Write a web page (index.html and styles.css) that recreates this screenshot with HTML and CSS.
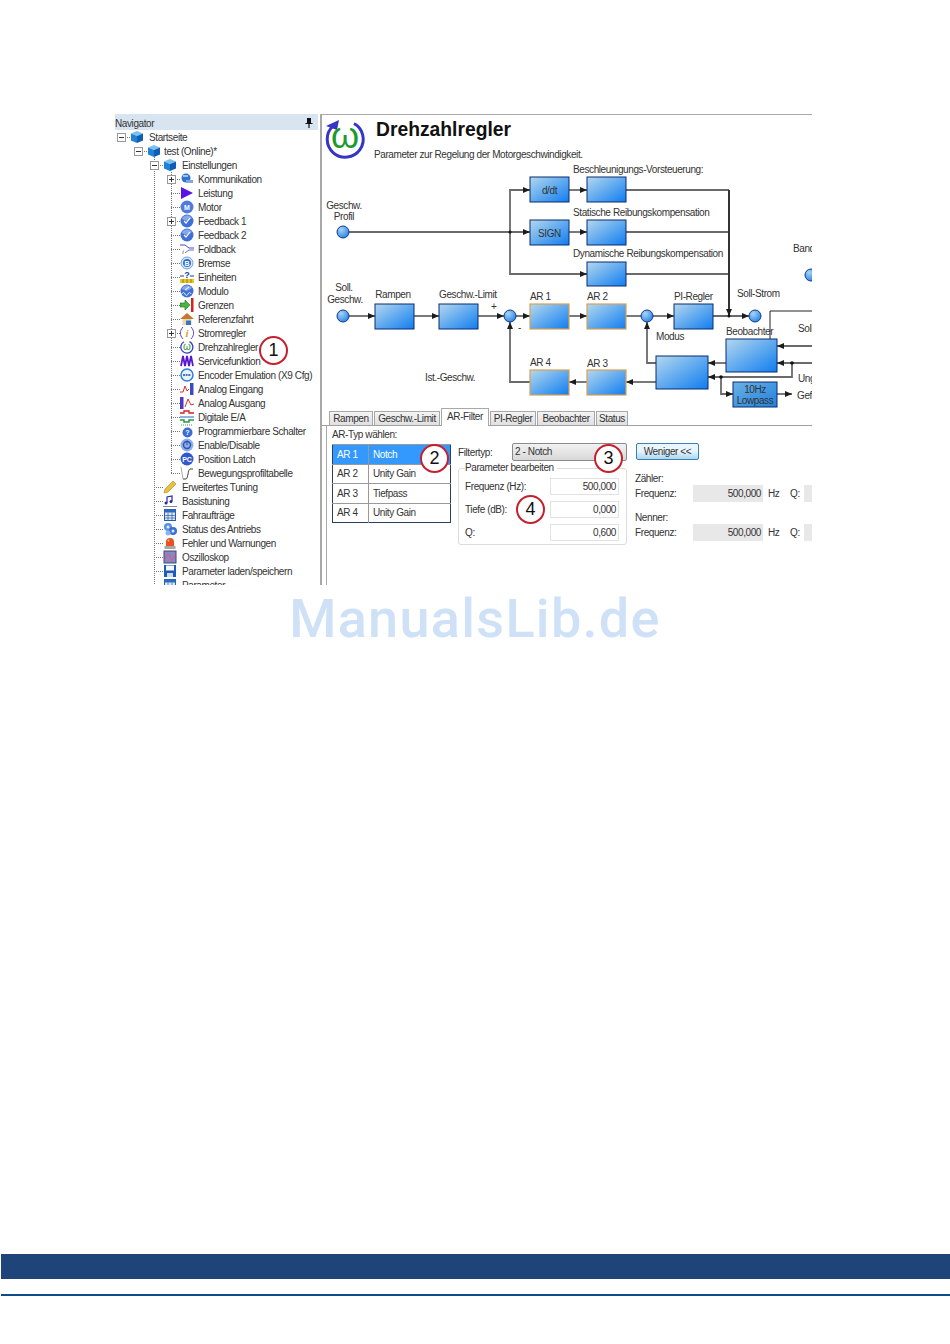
FILE: index.html
```html
<!DOCTYPE html>
<html lang="de">
<head>
    <meta charset="UTF-8">
    <title>Drehzahlregler</title>
    <link rel="stylesheet" href="styles.css">
</head>
<body>

    <svg class="defs">
        <defs>
            <symbol id="cube" viewBox="0 0 14 14">
                <polygon points="7,1 13,3.5 7,6 1,3.5" fill="#7cc0f0"/>
                <polygon points="1,3.5 7,6 7,13 1,10.5" fill="#1f82d8"/>
                <polygon points="13,3.5 7,6 7,13 13,10.5" fill="#0e5fb4"/>
            </symbol>
            <symbol id="ball" viewBox="0 0 14 14">
                <circle cx="7" cy="7" r="6.5" fill="#3f6fd8"/>
                <path d="M1.5 5 A6 6 0 0 1 12 4 L7 7 Z" fill="#86a8ea"/>
            </symbol>
            <symbol id="table" viewBox="0 0 14 14">
                <rect x="1.5" y="1.5" width="11" height="11" fill="#dce8f6" stroke="#2a5ea8"/>
                <rect x="1.5" y="1.5" width="11" height="3" fill="#2a6cc0"/>
                <path d="M1.5 7.5H12.5M1.5 10H12.5M5 4.5V12.5M9 4.5V12.5" stroke="#2a5ea8" stroke-width=".7"/>
            </symbol>
            <linearGradient id="blk" x1="0" y1="0" x2="1" y2="1">
                <stop offset="0" stop-color="#b4d8ee"/>
                <stop offset="1" stop-color="#0f7df0"/>
            </linearGradient>
            <linearGradient id="low" x1="0" y1="0" x2="1" y2="1">
                <stop offset="0" stop-color="#6cb2e6"/>
                <stop offset="1" stop-color="#1f80dc"/>
            </linearGradient>
            <radialGradient id="dot" cx=".35" cy=".3" r=".8">
                <stop offset="0" stop-color="#a9d4f6"/>
                <stop offset="1" stop-color="#1f7fe8"/>
            </radialGradient>
            <marker id="arr" markerUnits="userSpaceOnUse" markerWidth="8" markerHeight="6" refX="7" refY="3" orient="auto">
                <polygon points="0,0 7,3 0,6" fill="#1c1c1c"/>
            </marker>
        </defs>
    </svg>

    <div class="shot">
        <!-- Navigator tree -->
        <div class="nav">
            <div class="nav-head">
                <span>Navigator</span>
                <svg class="pin" viewBox="0 0 8 10"><path d="M2 0H6V5H7.5V6H4.6V10H3.4V6H.5V5H2Z" fill="#111"/></svg>
            </div>
            <div class="tree">
                <div class="guide g-test"></div>
                <div class="guide g-set"></div>
                <ul>
                    <li class="row l0"><span class="exp"><i class="box"></i></span><svg class="ico"><use href="#cube"/></svg><span>Startseite</span></li>
                    <li class="row l1"><span class="exp"><i class="box"></i></span><svg class="ico"><use href="#cube"/></svg><span>test (Online)*</span></li>
                    <li class="row l2"><span class="exp"><i class="box"></i></span><svg class="ico"><use href="#cube"/></svg><span>Einstellungen</span></li>
                    <li class="row l3"><span class="exp"><i class="box plus"></i></span><svg class="ico" viewBox="0 0 14 14"><circle cx="6" cy="6" r="4.5" fill="#2f72d0"/><rect x="6" y="8" width="7" height="3" fill="#7fa8dc"/><path d="M3 3h5v2H3z" fill="#9cc4f0"/></svg><span>Kommunikation</span></li>
                    <li class="row l3"><span class="exp"></span><svg class="ico" viewBox="0 0 14 14"><polygon points="1,1 13,7 1,13" fill="#5a14e6"/></svg><span>Leistung</span></li>
                    <li class="row l3"><span class="exp"></span><svg class="ico" viewBox="0 0 14 14"><circle cx="7" cy="7" r="6.5" fill="#4f7cdc"/><text class="ico-txt" x="7" y="10">M</text></svg><span>Motor</span></li>
                    <li class="row l3"><span class="exp"><i class="box plus"></i></span><svg class="ico" viewBox="0 0 14 14"><use href="#ball" width="14" height="14"/><path d="M4 7l2 2 4-5" fill="none" stroke="#fff" stroke-width="1.2"/></svg><span>Feedback 1</span></li>
                    <li class="row l3"><span class="exp"></span><svg class="ico" viewBox="0 0 14 14"><use href="#ball" width="14" height="14"/><path d="M4 7l2 2 4-5" fill="none" stroke="#fff" stroke-width="1.2"/></svg><span>Feedback 2</span></li>
                    <li class="row l3"><span class="exp"></span><svg class="ico" viewBox="0 0 14 14"><path d="M0 3H5L9 6H14" fill="none" stroke="#4a4ac0"/><path d="M5 11L9 8H14" fill="none" stroke="#6a6ad0"/><text class="ico-i" x="2" y="12">i</text></svg><span>Foldback</span></li>
                    <li class="row l3"><span class="exp"></span><svg class="ico" viewBox="0 0 14 14"><circle cx="7" cy="7" r="6" fill="#d8e8f8" stroke="#6aa0e0"/><circle cx="7" cy="7" r="4" fill="#2f6fd0"/><text class="ico-txt" x="7" y="9.5">B</text></svg><span>Bremse</span></li>
                    <li class="row l3"><span class="exp"></span><svg class="ico" viewBox="0 0 14 14"><text class="ico-q" x="7" y="7.5">?</text><path d="M0 6H4M10 6H14" stroke="#1a3fa0"/><rect x="0" y="9" width="14" height="4" fill="#e8c820"/><path d="M3 9v4M7 9v4M11 9v4" stroke="#806000" stroke-width=".7"/></svg><span>Einheiten</span></li>
                    <li class="row l3"><span class="exp"></span><svg class="ico" viewBox="0 0 14 14"><use href="#ball" width="14" height="14"/><path d="M2 10c1-2 2-2 3 0s2 2 3 0 2-2 3 0M5 6l4-3" fill="none" stroke="#fff"/></svg><span>Modulo</span></li>
                    <li class="row l3"><span class="exp"></span><svg class="ico" viewBox="0 0 14 14"><polygon points="0,5 5,5 5,2 10,7 5,12 5,9 0,9" fill="#48b83c" stroke="#1c6a18" stroke-width=".6"/><rect x="11" y="0" width="2.5" height="14" fill="#d82020"/></svg><span>Grenzen</span></li>
                    <li class="row l3"><span class="exp"></span><svg class="ico" viewBox="0 0 14 14"><polygon points="7,1 14,7 0,7" fill="#c8782a"/><rect x="2.5" y="7" width="9" height="6" fill="#e8d8b0"/><rect x="6" y="8.5" width="5" height="4.5" fill="#3a72c8"/></svg><span>Referenzfahrt</span></li>
                    <li class="row l3"><span class="exp"><i class="box plus"></i></span><svg class="ico" viewBox="0 0 14 14"><path d="M3 1C-.5 5-.5 9 3 13M11 1C14.5 5 14.5 9 11 13" fill="none" stroke="#6a40c8"/><text class="ico-y" x="7" y="11">i</text></svg><span>Stromregler</span></li>
                    <li class="row l3"><span class="exp"></span><svg class="ico" viewBox="0 0 14 14"><path d="M9.5 1.7A6 6 0 1 1 4 1.8" fill="none" stroke="#3838c8" stroke-width="1.3"/><text class="ico-w" x="7" y="10">ω</text></svg><span>Drehzahlregler</span></li>
                    <li class="row l3"><span class="exp"></span><svg class="ico" viewBox="0 0 14 14"><path d="M1 12L3 2 5 12 7 2 9 12 11 2 13 12" fill="none" stroke="#5a18d0" stroke-width="1.8"/></svg><span>Servicefunktion</span></li>
                    <li class="row l3"><span class="exp"></span><svg class="ico" viewBox="0 0 14 14"><circle cx="7" cy="7" r="6" fill="#e8f2fc" stroke="#2f7fd8" stroke-width="1.5"/><path d="M3 7H11" stroke="#1c4ea8" stroke-width="1.4" stroke-dasharray="2 .6"/></svg><span>Encoder Emulation (X9 Cfg)</span></li>
                    <li class="row l3"><span class="exp"></span><svg class="ico" viewBox="0 0 14 14"><path d="M0 10L3 10 5 4 7 9 9 7" fill="none" stroke="#d83030"/><rect x="10" y="1" width="3.5" height="12" fill="#3c4cc0"/></svg><span>Analog Eingang</span></li>
                    <li class="row l3"><span class="exp"></span><svg class="ico" viewBox="0 0 14 14"><rect x="0" y="1" width="3.5" height="12" fill="#5038c0"/><path d="M5 11L8 3 11 9 14 8" fill="none" stroke="#d83030"/></svg><span>Analog Ausgang</span></li>
                    <li class="row l3"><span class="exp"></span><svg class="ico" viewBox="0 0 14 14"><path d="M0 3H4V1H9V3H14" fill="none" stroke="#d82020" stroke-width="1.3"/><path d="M0 7H14" stroke="#3060d0"/><path d="M0 10H4V12H9V10H14" fill="none" stroke="#20a040" stroke-width="1.5"/></svg><span>Digitale E/A</span></li>
                    <li class="row l3"><span class="exp"></span><svg class="ico" viewBox="0 0 14 14"><path d="M1 1H13" stroke="#777" stroke-dasharray="1 1"/><circle cx="7.5" cy="8.5" r="5" fill="#3a6cd4"/><text class="ico-txt" x="7.5" y="11">?</text></svg><span>Programmierbare Schalter</span></li>
                    <li class="row l3"><span class="exp"></span><svg class="ico" viewBox="0 0 14 14"><circle cx="7" cy="7" r="6.5" fill="#8eaee8"/><circle cx="7" cy="7" r="3.5" fill="none" stroke="#2a50b8" stroke-width="1.4"/><path d="M7 2.5V7" stroke="#2a50b8"/></svg><span>Enable/Disable</span></li>
                    <li class="row l3"><span class="exp"></span><svg class="ico" viewBox="0 0 14 14"><circle cx="7" cy="7" r="6.5" fill="#3258d0"/><text class="ico-txt" x="7" y="9.5">PC</text></svg><span>Position Latch</span></li>
                    <li class="row l3"><span class="exp"></span><svg class="ico" viewBox="0 0 14 14"><path d="M3 13H6C8 13 8 3 10 3H13" fill="none" stroke="#444"/><path d="M1 1L3 13" stroke="#aaa"/></svg><span>Bewegungsprofiltabelle</span></li>
                    <li class="row l2"><span class="exp"></span><svg class="ico" viewBox="0 0 14 14"><polygon points="10,1 13,4 5,12 1,13 2,9" fill="#e8c040" stroke="#b08818" stroke-width=".6"/></svg><span>Erweitertes Tuning</span></li>
                    <li class="row l2"><span class="exp"></span><svg class="ico" viewBox="0 0 14 14"><path d="M4 9V3L9 2V7" fill="none" stroke="#2828a0" stroke-width="1.2"/><circle cx="3" cy="9" r="1.5" fill="#2828a0"/><circle cx="8" cy="7.5" r="1.5" fill="#2828a0"/><path d="M0 12.5H14" stroke="#888"/></svg><span>Basistuning</span></li>
                    <li class="row l2"><span class="exp"></span><svg class="ico"><use href="#table"/></svg><span>Fahraufträge</span></li>
                    <li class="row l2"><span class="exp"></span><svg class="ico" viewBox="0 0 14 14"><circle cx="5" cy="5" r="4" fill="#5a90e0"/><circle cx="10" cy="9" r="4" fill="#3a70d0"/><circle cx="5" cy="11" r="2.5" fill="#8ab4ec"/><circle cx="5" cy="5" r="1.5" fill="#e0ecfa"/><circle cx="10" cy="9" r="1.5" fill="#e0ecfa"/></svg><span>Status des Antriebs</span></li>
                    <li class="row l2"><span class="exp"></span><svg class="ico" viewBox="0 0 14 14"><path d="M3 10V6A4 4 0 0 1 11 6V10Z" fill="#e8501c"/><circle cx="5.5" cy="4.5" r="1" fill="#f8b890"/><rect x="1.5" y="10" width="11" height="3" fill="#a8a8a8"/></svg><span>Fehler und Warnungen</span></li>
                    <li class="row l2"><span class="exp"></span><svg class="ico" viewBox="0 0 14 14"><rect x="1" y="1" width="12" height="12" fill="#8a88b8" stroke="#444478"/><path d="M2 10C4 2 6 3 7 7S10 11 12 5" fill="none" stroke="#e0509c"/></svg><span>Oszilloskop</span></li>
                    <li class="row l2"><span class="exp"></span><svg class="ico" viewBox="0 0 14 14"><rect x="1" y="1" width="12" height="12" fill="#1c5cb8"/><rect x="3" y="1.5" width="8" height="5" fill="#f4f8fc"/><rect x="4" y="9" width="6" height="4" fill="#cfdcec"/></svg><span>Parameter laden/speichern</span></li>
                    <li class="row l2"><span class="exp"></span><svg class="ico"><use href="#table"/></svg><span>Parameter</span></li>
                </ul>
            </div>
        </div>

        <!-- Controller page -->
        <div class="pane">
            <svg class="diagram" viewBox="322 115 490 293">
                <path d="M354 123.5A18 18 0 1 1 333 126" fill="none" stroke="#3636c6" stroke-width="3"/>
                <polygon points="326,126 339,120 337,130" fill="#3636c6"/>
                <text class="omega" x="345" y="148">ω</text>
                <text class="title" x="376" y="136">Drehzahlregler</text>
                <text class="lbl" x="374" y="157.5">Parameter zur Regelung der Motorgeschwindigkeit.</text>

                <!-- signal lines -->
                <g class="wire">
                    <path d="M349 232H530" marker-end="url(#arr)"/>
                    <path d="M510 232V190H530" marker-end="url(#arr)"/>
                    <path d="M510 232V274H587" marker-end="url(#arr)"/>
                    <path d="M569 190H587" marker-end="url(#arr)"/>
                    <path d="M569 232H587" marker-end="url(#arr)"/>
                    <path d="M626 190H729M626 232H729M626 274H729"/>
                    <path d="M349 316H375" marker-end="url(#arr)"/>
                    <path d="M414 316H439" marker-end="url(#arr)"/>
                    <path d="M478 316H504" marker-end="url(#arr)"/>
                    <path d="M516 316H530" marker-end="url(#arr)"/>
                    <path d="M569 316H587" marker-end="url(#arr)"/>
                    <path d="M626 316H641"/>
                    <path d="M653 316H674" marker-end="url(#arr)"/>
                    <path d="M713 316H749" marker-end="url(#arr)"/>
                    <path d="M530 382H510V322" marker-end="url(#arr)"/>
                    <path d="M587 382H569" marker-end="url(#arr)"/>
                    <path d="M656 382H626" marker-end="url(#arr)"/>
                    <path d="M656 363H647V322" marker-end="url(#arr)"/>
                    <path d="M726 363H708" marker-end="url(#arr)"/>
                    <path d="M812 346H777" marker-end="url(#arr)"/>
                    <path d="M812 363H777" marker-end="url(#arr)"/>
                    <path d="M792 363V377H708" marker-end="url(#arr)"/>
                    <path d="M721 377V394H733" marker-end="url(#arr)"/>
                    <path d="M777 394H792" marker-end="url(#arr)"/>
                </g>
                <path class="bus" d="M729 190V316" marker-end="url(#arr)"/>
                <path class="thin" d="M770 339V311H812"/>
                <circle class="node" cx="510" cy="232" r="1.5"/>
                <circle class="node" cx="729" cy="316" r="1.5"/>
                <circle class="node" cx="792" cy="363" r="1.8"/>
                <circle class="node" cx="721" cy="377" r="1.8"/>

                <!-- blocks -->
                <rect class="blk" x="530" y="177" width="39" height="25"/>
                <rect class="blk" x="587" y="177" width="39" height="25"/>
                <rect class="blk" x="530" y="220" width="39" height="25"/>
                <rect class="blk" x="587" y="220" width="39" height="25"/>
                <rect class="blk" x="587" y="262" width="39" height="24"/>
                <rect class="blk" x="375" y="304" width="39" height="25"/>
                <rect class="blk" x="439" y="304" width="39" height="25"/>
                <rect class="blk ar" x="530" y="304" width="39" height="25"/>
                <rect class="blk ar" x="587" y="304" width="39" height="25"/>
                <rect class="blk" x="674" y="304" width="39" height="25"/>
                <rect class="blk ar" x="530" y="370" width="39" height="25"/>
                <rect class="blk ar" x="587" y="370" width="39" height="25"/>
                <rect class="blk" x="656" y="356" width="52" height="33"/>
                <rect class="blk" x="726" y="339" width="51" height="33"/>
                <rect class="blk lowpass" x="733" y="382" width="44" height="25"/>

                <circle class="sum" cx="343" cy="232" r="6"/>
                <circle class="sum" cx="343" cy="316" r="6"/>
                <circle class="sum" cx="510" cy="316" r="6"/>
                <circle class="sum" cx="647" cy="316" r="6"/>
                <circle class="sum" cx="755" cy="316" r="6"/>
                <circle class="sum" cx="811" cy="275" r="6"/>

                <!-- labels -->
                <text class="lbl mid" x="549.5" y="193.5">d/dt</text>
                <text class="lbl mid" x="549.5" y="236.5">SIGN</text>
                <text class="lbl" x="573" y="172.5">Beschleunigungs-Vorsteuerung:</text>
                <text class="lbl" x="573" y="215.5">Statische Reibungskompensation</text>
                <text class="lbl" x="573" y="257">Dynamische Reibungskompensation</text>
                <text class="lbl" x="793" y="251.5">Band</text>
                <text class="lbl mid" x="344" y="208.5">Geschw.</text>
                <text class="lbl mid" x="344" y="219.5">Profil</text>
                <text class="lbl mid" x="344" y="290.5">Soll.</text>
                <text class="lbl mid" x="345" y="302.5">Geschw.</text>
                <text class="lbl mid" x="393" y="297.5">Rampen</text>
                <text class="lbl" x="439" y="297.5">Geschw.-Limit</text>
                <text class="lbl" x="491" y="310">+</text>
                <text class="lbl" x="518" y="331">-</text>
                <text class="lbl" x="530" y="299.5">AR 1</text>
                <text class="lbl" x="587" y="299.5">AR 2</text>
                <text class="lbl" x="674" y="299.5">PI-Regler</text>
                <text class="lbl" x="737" y="296.5">Soll-Strom</text>
                <text class="lbl" x="726" y="334.5">Beobachter</text>
                <text class="lbl" x="656" y="339.5">Modus</text>
                <text class="lbl" x="798" y="331.5">Soll</text>
                <text class="lbl" x="798" y="381.5">Ung</text>
                <text class="lbl" x="797" y="398.5">Gef</text>
                <text class="lbl" x="530" y="365.5">AR 4</text>
                <text class="lbl" x="587" y="366.5">AR 3</text>
                <text class="lbl" x="425" y="380.5">Ist.-Geschw.</text>
                <text class="lbl mid" x="755" y="392.5">10Hz</text>
                <text class="lbl mid" x="755" y="403.5">Lowpass</text>
            </svg>

            <div class="tabs">
                <div class="tab t-rampen">Rampen</div>
                <div class="tab t-limit">Geschw.-Limit</div>
                <div class="tab t-filter active">AR-Filter</div>
                <div class="tab t-regler">PI-Regler</div>
                <div class="tab t-beob">Beobachter</div>
                <div class="tab t-status">Status</div>
            </div>

            <div class="panel">
                <div class="ar-col">
                    <div class="ar-title">AR-Typ wählen:</div>
                    <table class="ar-table">
                        <tr class="sel"><td>AR 1</td><td>Notch</td></tr>
                        <tr><td>AR 2</td><td>Unity Gain</td></tr>
                        <tr><td>AR 3</td><td>Tiefpass</td></tr>
                        <tr><td>AR 4</td><td>Unity Gain</td></tr>
                    </table>
                </div>

                <div class="filter-col">
                    <div class="filter-row">
                        <span class="filter-label">Filtertyp:</span>
                        <div class="combo">2 - Notch</div>
                    </div>
                    <fieldset class="params">
                        <legend>Parameter bearbeiten</legend>
                        <div class="param"><span>Frequenz (Hz):</span><div class="num">500,000</div></div>
                        <div class="param"><span>Tiefe (dB):</span><div class="num">0,000</div></div>
                        <div class="param"><span>Q:</span><div class="num">0,600</div></div>
                    </fieldset>
                </div>

                <div class="more-col">
                    <div class="btn">Weniger &lt;&lt;</div>
                    <div class="group">
                        <div>Zähler:</div>
                        <div class="coef"><span class="coef-label">Frequenz:</span><div class="num ro">500,000</div><span class="unit">Hz</span><span class="q">Q:</span><div class="num ro stub"></div></div>
                    </div>
                    <div class="group">
                        <div>Nenner:</div>
                        <div class="coef"><span class="coef-label">Frequenz:</span><div class="num ro">500,000</div><span class="unit">Hz</span><span class="q">Q:</span><div class="num ro stub"></div></div>
                    </div>
                </div>
            </div>
        </div>

        <!-- Callouts -->
        <div class="mark m1">1</div>
        <div class="mark m2">2</div>
        <div class="mark m3">3</div>
        <div class="mark m4">4</div>
    </div>

    <div class="watermark">ManualsLib.de</div>
    <div class="footer-bar"></div>
    <div class="footer-line"></div>

</body>
</html>
```

FILE: styles.css
```css
html, body {
    margin: 0;
    padding: 0;
    background-color: #fff;
}
body {
    height: 1344px;
    overflow: hidden;
    padding-top: 114px;
    box-sizing: border-box;
    font-family: "Liberation Sans", Arial, sans-serif;
    font-size: 10px;
    letter-spacing: -0.4px;
    color: #333;
}
svg text {
    letter-spacing: 0;
}
.defs {
    display: block;
    width: 0;
    height: 0;
}

.shot {
    position: relative;
    display: flex;
    width: 699px;
    height: 471px;
    margin-left: 113px;
    overflow: hidden;
}

/* Navigator */
.nav {
    width: 207px;
    flex: none;
}
.nav-head {
    display: flex;
    justify-content: space-between;
    align-items: center;
    height: 16px;
    margin: 0 2px 0 2px;
    padding: 2px 5px 0 0;
    box-sizing: border-box;
    background-color: #d8e5f1;
}
.pin {
    width: 8px;
    height: 10px;
}
.tree {
    position: relative;
}
.tree ul {
    list-style: none;
    margin: 0;
    padding: 0;
}
.guide {
    position: absolute;
    width: 1px;
    background-image: repeating-linear-gradient(180deg, #777 0 1px, transparent 1px 2px);
}
.g-test {
    left: 41px;
    top: 27px;
    height: 428px;
}
.g-set {
    left: 58px;
    top: 42px;
    height: 301px;
}
.row {
    position: relative;
    display: flex;
    align-items: center;
    height: 14px;
    white-space: nowrap;
}
.l0 { padding-left: 4px; }
.l1 { padding-left: 21px; }
.l2 { padding-left: 37px; }
.l3 { padding-left: 54px; }
.ico {
    width: 14px;
    height: 14px;
    flex: none;
}
.l0 .ico { margin-right: 5px; }
.l1 .ico { margin-right: 3px; }
.l2 .ico { margin-right: 5px; }
.l3 .ico { margin-right: 4px; }
.exp {
    position: relative;
    display: flex;
    align-items: center;
    width: 13px;
    height: 14px;
    flex: none;
    background: repeating-linear-gradient(90deg, #777 0 1px, transparent 1px 2px) 4px 7px / 9px 1px no-repeat;
}
.box {
    display: block;
    width: 7px;
    height: 7px;
    border: 1px solid #999;
    background:
        linear-gradient(#333, #333) center / 5px 1px no-repeat,
        #fff;
}
.box.plus {
    background:
        linear-gradient(#333, #333) center / 5px 1px no-repeat,
        linear-gradient(#333, #333) center / 1px 5px no-repeat,
        #fff;
}
.ico-txt {
    font-size: 7px;
    font-weight: bold;
    fill: #fff;
    text-anchor: middle;
}
.ico-i {
    font: italic 7px "Liberation Serif", serif;
    fill: #555;
}
.ico-q {
    font-size: 9px;
    font-weight: bold;
    fill: #1a3fa0;
    text-anchor: middle;
}
.ico-y {
    font: italic bold 11px "Liberation Serif", serif;
    fill: #d8a820;
    text-anchor: middle;
}
.ico-w {
    font-size: 10px;
    fill: #1c9a30;
    text-anchor: middle;
}

/* Right pane */
.pane {
    display: flex;
    flex-direction: column;
    flex: 1;
    min-width: 0;
    border-top: 1px solid #aaa;
    border-left: 2px solid #a8a8a8;
}
.diagram {
    display: block;
    width: 490px;
    height: 293px;
    flex: none;
}
.diagram text {
    font-family: "Liberation Sans", Arial, sans-serif;
}
.title {
    font-size: 19.3px;
    font-weight: bold;
    fill: #111;
}
.omega {
    font-size: 36px;
    fill: #1c9a30;
    text-anchor: middle;
}
.lbl {
    font-size: 10px;
    letter-spacing: -0.4px;
    fill: #333;
}
.mid {
    text-anchor: middle;
}
.wire path {
    fill: none;
    stroke: #6a6a6a;
    stroke-width: 1.8;
}
.bus {
    fill: none;
    stroke: #333;
    stroke-width: 2;
}
.thin {
    fill: none;
    stroke: #222;
    stroke-width: 1;
}
.node {
    fill: #111;
}
.blk {
    fill: url(#blk);
    stroke: #0a2a70;
    stroke-width: 1;
}
.blk.ar {
    stroke: #d9a050;
    stroke-width: 1.2;
}
.blk.lowpass {
    fill: url(#low);
}
.sum {
    fill: url(#dot);
    stroke: #123a80;
    stroke-width: 1;
}

/* Tabs */
.tabs {
    display: flex;
    align-items: flex-end;
    height: 18px;
    flex: none;
    box-sizing: border-box;
    padding-left: 7px;
    border-bottom: 1px solid #a0a0a0;
}
.tab {
    height: 14px;
    line-height: 14px;
    margin-right: 1px;
    text-align: center;
    background: linear-gradient(#f4f4f4, #e0e0e0);
    border: 1px solid #a8a8a8;
    border-bottom: 0;
    box-sizing: border-box;
}
.tab.active {
    height: 18px;
    margin-bottom: -1px;
    line-height: 15px;
    background: #fff;
}
.t-rampen { width: 44px; }
.t-limit { width: 66px; }
.t-filter { width: 48px; }
.t-regler { width: 46px; }
.t-beob { width: 58px; }
.t-status { width: 32px; }

/* Filter panel */
.panel {
    display: flex;
    flex: 1;
    min-height: 0;
    margin-left: 4px;
    padding-left: 5px;
    border-left: 1px solid #aaa;
}
.ar-col {
    width: 119px;
    margin-right: 7px;
    flex: none;
}
.ar-title {
    height: 12px;
    line-height: 12px;
    margin-top: 3px;
    margin-bottom: 3px;
}
.ar-table {
    width: 119px;
    border-collapse: collapse;
    border: 1px solid #2c3e58;
}
.ar-table td {
    height: 19.5px;
    padding: 0 0 0 4px;
    box-sizing: border-box;
    border-top: 1px solid #999;
}
.ar-table td:first-child {
    width: 36px;
    border-right: 1px solid #999;
}
.ar-table .sel td {
    background-color: #3399ff;
    color: #fff;
}
.filter-col {
    width: 169px;
    margin-right: 8px;
    padding-top: 17px;
    flex: none;
}
.filter-row {
    display: flex;
    align-items: center;
    justify-content: space-between;
    height: 18px;
}
.combo {
    width: 115px;
    height: 18px;
    line-height: 16px;
    padding-left: 2px;
    box-sizing: border-box;
    border: 1px solid #8a8a8a;
    border-radius: 2px;
    background: linear-gradient(#f2f2f2, #d8d8d8);
}
.params {
    margin: 1px 0 0;
    padding: 4px 7px 3px 6px;
    border: 1px solid #dcdcdc;
    border-radius: 3px;
}
.params legend {
    padding: 0 3px 0 0;
    height: 12px;
    line-height: 12px;
}
.param {
    display: flex;
    align-items: center;
    justify-content: space-between;
    height: 17px;
    margin-bottom: 6px;
}
.param:last-child {
    margin-bottom: 0;
}
.num {
    width: 69px;
    height: 17px;
    line-height: 15px;
    padding-right: 2px;
    box-sizing: border-box;
    border: 1px solid #e2e2e2;
    text-align: right;
}
.more-col {
    flex: 1;
    min-width: 0;
    padding-top: 17px;
}
.btn {
    width: 63px;
    height: 17px;
    line-height: 15px;
    margin-left: 1px;
    box-sizing: border-box;
    text-align: center;
    border: 1px solid #3c7fb1;
    border-radius: 2px;
    background: linear-gradient(#eaf6fd 45%, #a9d9f3);
}
.group {
    margin-top: 13px;
    line-height: 12px;
}
.group + .group {
    margin-top: 10px;
}
.coef {
    display: flex;
    align-items: center;
    height: 17px;
}
.coef-label {
    width: 58px;
    flex: none;
}
.num.ro {
    width: 70px;
    flex: none;
    border: 0;
    line-height: 17px;
    background-color: #e8e8e8;
}
.unit {
    width: 27px;
    flex: none;
    padding-left: 5px;
    box-sizing: border-box;
}
.q {
    width: 14px;
    flex: none;
}
.num.stub {
    width: 10px;
}

/* Numbered callouts */
.mark {
    position: absolute;
    width: 29px;
    height: 29px;
    box-sizing: border-box;
    border: 2px solid #c4202e;
    border-radius: 50%;
    text-align: center;
    font-size: 18px;
    letter-spacing: 0;
    line-height: 25px;
    color: #111;
    background-color: #fff;
}
.m1 { left: 146px; top: 222px; }
.m2 { left: 307px; top: 330px; }
.m3 { left: 481px; top: 330px; }
.m4 { left: 403px; top: 381px; }

/* Page furniture */
.watermark {
    margin-top: 4px;
    height: 60px;
    line-height: 60px;
    text-align: center;
    font-family: Roboto, sans-serif;
    font-size: 54px;
    font-weight: 500;
    letter-spacing: 1.3px;
    color: #cfe1f7;
}
.footer-bar {
    height: 25px;
    margin-top: 605px;
    margin-left: 1px;
    background-color: #1f447a;
}
.footer-line {
    height: 2px;
    margin-top: 15px;
    margin-left: 1px;
    background-color: #0f4c86;
}
```
